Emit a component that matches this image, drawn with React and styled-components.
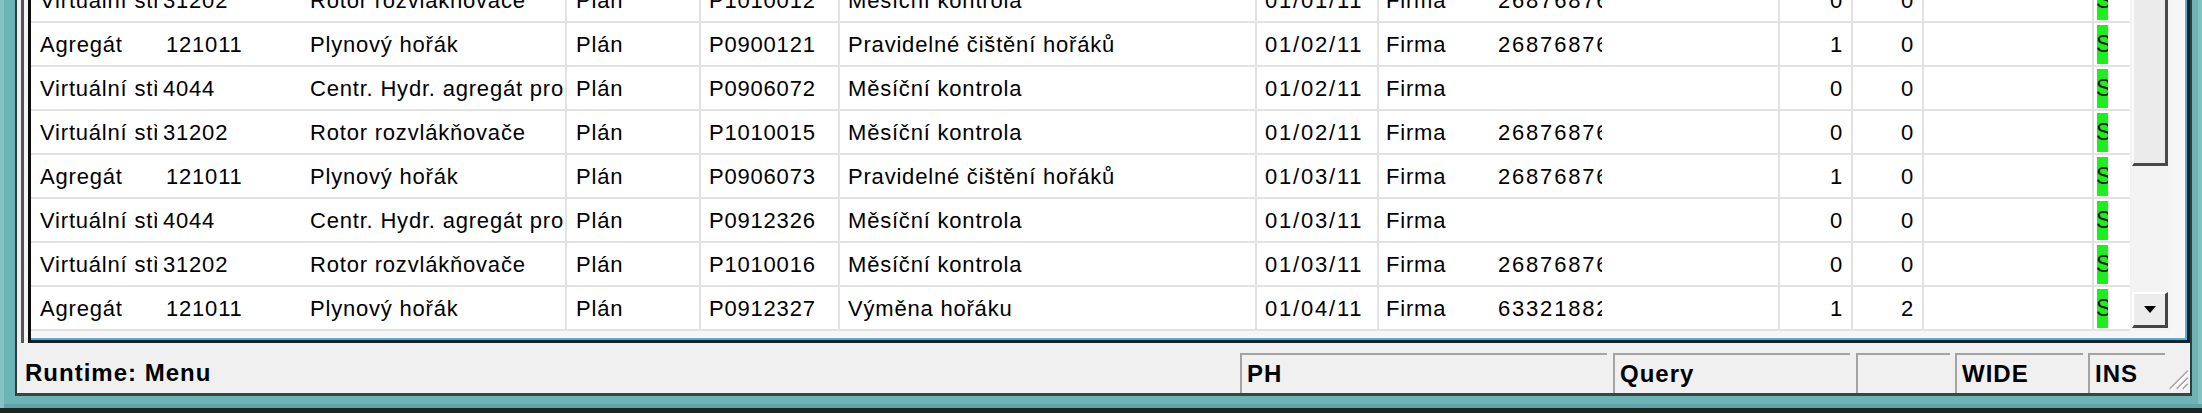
import React from 'react';
import styled, { createGlobalStyle } from 'styled-components';

const GlobalStyle = createGlobalStyle`
  html, body { margin: 0; padding: 0; background: #6cb4b5; }
  body { width: 2202px; height: 413px; overflow: hidden; }
`;

const Window = styled.div`
  width: 2202px;
  height: 413px;
  box-sizing: border-box;
  display: flex;
  padding: 0 10px 12px 15px;
  border-bottom: 5px solid #1b2323;
  background: #6cb4b5;
  box-shadow: inset 4px 0 0 #84c3c3, inset 0 -4px 0 #5ea6a8, inset -4px 0 0 #84c3c3;
  font-family: "Liberation Sans", Arial, sans-serif;
`;

const Client = styled.div`
  flex: 1;
  min-width: 0;
  display: flex;
  flex-direction: column;
  background: #f0f0f0;
  border-left: 2px solid #2e3d3e;
  border-right: 2px solid #2e3d3e;
  border-bottom: 3px solid #3c4546;
`;

const ListFrame = styled.div`
  height: 343px;
  display: flex;
  margin-left: 4px;
  border-left: 3px solid #555;
  padding-left: 4px;
  background: #f4f4f4;
`;

const ListBox = styled.div`
  flex: 1;
  min-width: 0;
  display: flex;
  align-items: flex-start;
  background: #f6f6f6;
  border-left: 3px solid #0d0d0d;
  border-right: 3px solid #14232b;
  border-bottom: 3px solid #14232b;
  padding: 0 17px 7px 0;
  box-shadow: inset 0 -2px 0 #5aaed4, inset -2px 0 0 #5aaed4;
`;

const RowsArea = styled.div`
  flex: 0 0 2099px;
  height: 331px;
  overflow: hidden;
  background: #fff;
`;

// first row is only half visible: the list is scrolled
const Rows = styled.div`
  margin-top: -21px;
`;

const Row = styled.div`
  display: flex;
  height: 42px;
  line-height: 43px;
  border-bottom: 2px solid #e2e2e2;
  font-size: 22px;
  letter-spacing: 0.8px;
  color: #000;
`;

const Cell = styled.div`
  flex: 0 0 ${p => p.$w}px;
  box-sizing: border-box;
  padding: 0 ${p => p.$pr || 0}px 0 ${p => p.$pl || 0}px;
  border-right: ${p => (p.$line ? '2px solid #e2e2e2' : 'none')};
  text-align: ${p => (p.$right ? 'right' : 'left')};
  letter-spacing: ${p => (p.$wide ? '1.8px' : 'inherit')};
  white-space: nowrap;
  overflow: hidden;
`;

const GreenMark = styled.span`
  display: block;
  width: 11px;
  height: 39px;
  margin: 2px 0 1px 3px;
  background: #1cf01c;
  overflow: hidden;
  font-size: 23px;
  line-height: 39px;
  letter-spacing: 0;
  text-indent: -1px;
  color: #102010;
`;

const ScrollBar = styled.div`
  flex: 0 0 40px;
  height: 331px;
  box-sizing: border-box;
  display: flex;
  flex-direction: column;
  padding: 0 2px;
  background: #f3f3f3;
`;

const Thumb = styled.div`
  height: 166px;
  box-sizing: border-box;
  background: #ebebeb;
  border-left: 2px solid #fafafa;
  border-right: 3px solid #484848;
  border-bottom: 3px solid #484848;
`;

const Track = styled.div`
  flex: 1;
`;

const ArrowButton = styled.div`
  height: 36px;
  margin-bottom: 3px;
  box-sizing: border-box;
  display: flex;
  align-items: center;
  justify-content: center;
  background: #ececec;
  border-top: 2px solid #fff;
  border-left: 2px solid #fff;
  border-right: 3px solid #444;
  border-bottom: 3px solid #444;
`;

const DownTriangle = styled.span`
  width: 0;
  height: 0;
  border-left: 6px solid transparent;
  border-right: 6px solid transparent;
  border-top: 7px solid #000;
`;

const StatusBar = styled.div`
  flex: 1;
  display: flex;
  align-items: flex-end;
  padding-left: 8px;
  font-size: 24px;
  font-weight: bold;
  letter-spacing: 1px;
  color: #000;
`;

const StatusLabel = styled.div`
  flex: 1;
  height: 40px;
  line-height: 40px;
  white-space: nowrap;
`;

const Panel = styled.div`
  flex: 0 0 ${p => p.$w}px;
  margin-left: ${p => p.$gap}px;
  height: 40px;
  box-sizing: border-box;
  border-top: 2px solid #a3a3a3;
  border-left: 2px solid #a3a3a3;
  padding-left: 5px;
  line-height: 37px;
  white-space: nowrap;
  overflow: hidden;
`;

const Grip = styled.svg`
  flex: 0 0 25px;
  height: 40px;
  display: block;
`;

const columns = [
  { w: 126, pl: 9 },
  { w: 145, pl: 6 },
  { w: 265, pl: 8, line: true },
  { w: 134, pl: 9, line: true },
  { w: 139, pl: 8, line: true },
  { w: 417, pl: 8, line: true },
  { w: 122, pl: 8, line: true, wide: true },
  { w: 112, pl: 7 },
  { w: 111, pl: 7, wide: true },
  { w: 178, line: true },
  { w: 73, pr: 8, right: true, line: true },
  { w: 71, pr: 8, right: true, line: true },
  { w: 170, line: true },
  { w: 19, green: true },
  { w: 17 },
];

const virt31202 = (id, date) => ['Virtuální stř', '31202', 'Rotor rozvlákňovače', 'Plán', id, 'Měsíční kontrola', date, 'Firma', '26876876', '', '0', '0', '', 'S', ''];
const virt4044 = (id, date) => ['Virtuální stř', '4044', 'Centr. Hydr. agregát pro', 'Plán', id, 'Měsíční kontrola', date, 'Firma', '', '', '0', '0', '', 'S', ''];
const agregat = (id, task, date, tel, a, b) => ['Agregát', '121011', 'Plynový hořák', 'Plán', id, task, date, 'Firma', tel, '', a, b, '', 'S', ''];

const rows = [
  virt31202('P1010012', '01/01/11'),
  agregat('P0900121', 'Pravidelné čištění hořáků', '01/02/11', '26876876', '1', '0'),
  virt4044('P0906072', '01/02/11'),
  virt31202('P1010015', '01/02/11'),
  agregat('P0906073', 'Pravidelné čištění hořáků', '01/03/11', '26876876', '1', '0'),
  virt4044('P0912326', '01/03/11'),
  virt31202('P1010016', '01/03/11'),
  agregat('P0912327', 'Výměna hořáku', '01/04/11', '63321882', '1', '2'),
];

const panels = [
  { text: 'PH', w: 367, gap: 6 },
  { text: 'Query', w: 237, gap: 6 },
  { text: '', w: 94, gap: 6 },
  { text: 'WIDE', w: 128, gap: 5 },
  { text: 'INS', w: 77, gap: 5 },
];

const App = () => (
  <>
    <GlobalStyle />
    <Window>
      <Client>
        <ListFrame>
          <ListBox>
            <RowsArea>
              <Rows>
                {rows.map((row, r) => (
                  <Row key={r}>
                    {columns.map((col, c) => (
                      <Cell
                        key={c}
                        $w={col.w}
                        $pl={c === 1 && row[1] === '121011' ? 9 : col.pl}
                        $pr={col.pr}
                        $right={col.right}
                        $line={col.line}
                        $wide={col.wide}
                      >
                        {col.green ? <GreenMark>{row[c]}</GreenMark> : row[c]}
                      </Cell>
                    ))}
                  </Row>
                ))}
              </Rows>
            </RowsArea>
            <ScrollBar>
              <Thumb />
              <Track />
              <ArrowButton>
                <DownTriangle />
              </ArrowButton>
            </ScrollBar>
          </ListBox>
        </ListFrame>
        <StatusBar>
          <StatusLabel>Runtime: Menu</StatusLabel>
          {panels.map((p, i) => (
            <Panel key={i} $w={p.w} $gap={p.gap}>{p.text}</Panel>
          ))}
          <Grip viewBox="0 0 25 40">
            <g strokeWidth="2">
              <line x1="23" y1="18" x2="5" y2="36" stroke="#a0a0a0" />
              <line x1="24" y1="19" x2="6" y2="37" stroke="#fff" />
              <line x1="23" y1="25" x2="12" y2="36" stroke="#a0a0a0" />
              <line x1="24" y1="26" x2="13" y2="37" stroke="#fff" />
              <line x1="23" y1="31" x2="18" y2="36" stroke="#a0a0a0" />
              <line x1="24" y1="32" x2="19" y2="37" stroke="#fff" />
            </g>
          </Grip>
        </StatusBar>
      </Client>
    </Window>
  </>
);

export default App;
